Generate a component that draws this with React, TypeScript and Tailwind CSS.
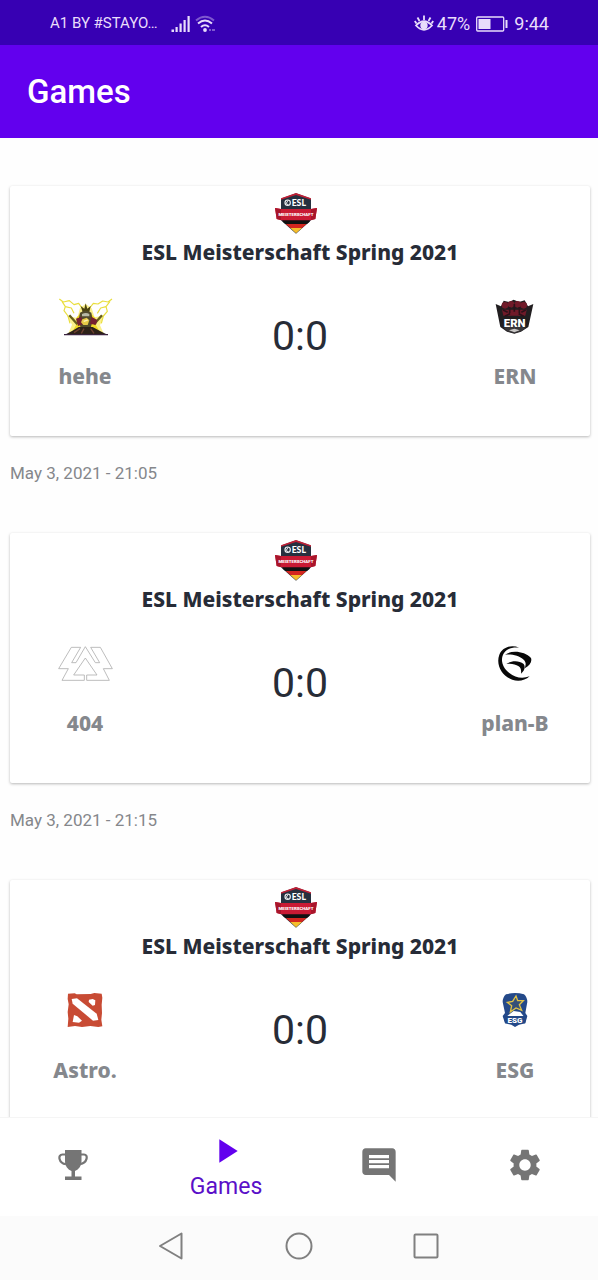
import type { ReactNode } from "react";
import { MdComment, MdPlayArrow, MdSettings } from "react-icons/md";

function EslLogo() {
  return (
    <svg viewBox="45 20 126 123" className="mr-2 h-[41px] w-[42px]" role="img" aria-label="ESL Meisterschaft">
      <path d="M108 21 L142 33 L153 38 V102 L108 142 L63 102 V38 L74 33 Z" fill="#26303f" />
      <path d="M63 40 V36 L108 20 L153 36 V40 L108 26 Z" fill="#c02036" />
      <path d="M68 101 H149 V106 L141 113 H76 L68 106 Z" fill="#111" />
      <path d="M77 113 H140 L126 125 H91 Z" fill="#d3261f" />
      <path d="M91 125 H126 L108 141 Z" fill="#f5bd2c" />
      <path d="M45 65 L63 68 H153 L171 65 L166 98 L151 102 H65 L50 98 Z" fill="#c91a34" />
      <path d="M45 65 L63 68 V102 L50 98 Z M171 65 L153 68 V102 L166 98 Z" fill="#a9152b" />
      <circle cx="83" cy="49" r="8" fill="none" stroke="#eef0f3" strokeWidth="3.500" />
      <path d="M84 42 L79 51 L85 56" fill="none" stroke="#eef0f3" strokeWidth="3" />
      <text x="95" y="58" fontFamily="Lato" fontWeight="900" fontSize="26" fill="#fff">ESL</text>
      <text x="108" y="90" textAnchor="middle" fontFamily="Roboto" fontWeight="900" fontSize="13" fill="#fff">MEISTERSCHAFT</text>
    </svg>
  );
}

function HeheLogo() {
  return (
    <svg viewBox="50 24 165 114" className="h-[38px] w-[55px]" aria-hidden="true">
      <path d="M80 133 L92 104 L78 78 L108 84 L116 54 L133 42 L151 55 L160 82 L188 76 L176 106 L188 133 Z" fill="#fbf08a" />
      <path d="M90 130 L104 106 L106 82 L133 56 L162 84 L164 106 L178 130 Z" fill="#f0d824" />
      <g fill="none" stroke="#e9de3c" strokeWidth="3.500" strokeLinejoin="round">
        <path d="M54 27 L66 36 L84 32 L98 44 L112 40 L122 54" />
        <path d="M62 34 L72 50 L68 62 L80 78 L86 100" />
        <path d="M72 50 L90 54 L98 70" />
        <path d="M212 27 L200 36 L184 33 L170 42 L156 40 L145 54" />
        <path d="M206 34 L194 50 L198 64 L186 78 L180 100" />
        <path d="M194 50 L178 54 L168 70" />
      </g>
      <path d="M84 76 L108 103 M182 76 L158 103" stroke="#665e1a" strokeWidth="7" />
      <path d="M124 66 L118 48 L129 56 L133 40 L138 56 L148 48 L144 66 Z" fill="#4b4310" />
      <path d="M116 68 Q133 56 150 68 L154 90 L148 114 H118 L112 90 Z" fill="#514a2b" />
      <path d="M122 72 Q134 66 144 72 V79 H122 Z" fill="#b8b9a5" />
      <path d="M104 86 L120 80 L126 102 L110 108 Z M150 80 L168 90 L164 104 L146 102 Z" fill="#762030" />
      <path d="M123 88 L136 83 L144 91 L139 105 H126 L119 97 Z" fill="#e6c947" />
      <path d="M127 94 L139 90" stroke="#fff3b5" strokeWidth="4" />
      <path d="M69 135 L92 123 L112 111 H154 L176 123 L200 135 Z" fill="#2d2118" />
      <path d="M98 128 L116 116 M120 130 L128 116 M148 116 L158 130" stroke="#6f4030" strokeWidth="4" />
      <path d="M68 134 H200" stroke="#3a233e" strokeWidth="4" />
    </svg>
  );
}

function ErnLogo() {
  return (
    <svg viewBox="46 39 117 114" className="h-[38px] w-[39px]" aria-hidden="true">
      <path d="M48 57 L64 64 L72 47 L88 51 L102 44 L118 51 L135 46 L145 64 L161 57 L146 126 L124 140 L104 146 L82 140 L62 126 Z" fill="#211e20" />
      <g fill="#701a29">
        <circle cx="76" cy="61" r="10" />
        <circle cx="94" cy="58" r="10" />
        <circle cx="114" cy="58" r="10" />
        <circle cx="132" cy="61" r="10" />
        <path d="M67 74 H141 L137 92 H71 Z" />
      </g>
      <path d="M70 75 L84 82 M90 66 V85 M104 57 V80 M119 66 V85 M138 75 L125 82 M76 94 L91 86 M132 94 L117 86" stroke="#2c1119" strokeWidth="5" />
      <path d="M72 128 L104 121 L139 128 L124 139 L104 145 L83 139 Z" fill="#383638" />
      <path d="M88 136 L104 131 L120 136 L104 142 Z" fill="#c9c7c6" />
      <text x="105" y="126" textAnchor="middle" fontFamily="Roboto" fontWeight="900" fontSize="34" fill="#fff">ERN</text>
    </svg>
  );
}

function FourLogo() {
  return (
    <svg viewBox="51 30 165 114" className="h-[38px] w-[55px]" aria-hidden="true">
      <path
        d="M91 37 H119 L92 83 H105 L133 35 L163 83 H176 L149 37 H178 L214 101 H187 L205 136 H137 V120 H168 L133 69 L98 120 H130 V136 H63 L82 101 H53 Z"
        fill="none"
        stroke="#acacac"
        strokeWidth="2.400"
      />
    </svg>
  );
}

function PlanBLogo() {
  return (
    <svg viewBox="80 30 108 114" className="h-[38px] w-[36px]" aria-hidden="true">
      <path d="M147 38 C123 28 96 36 87 59 C76 89 94 123 126 134 C143 141 164 137 178 124 C156 132 134 128 117 114 C95 97 89 72 101 54 C110 41 126 36 147 38 Z" fill="#080808" />
      <path d="M104 59 C126 44 164 50 182 69 C186 80 178 91 163 100 C167 90 168 82 160 74 C147 61 122 56 104 59 Z" fill="#080808" />
      <path d="M108 87 C124 76 146 76 160 87 C166 96 163 106 152 116 C153 106 152 99 145 94 C135 87 122 85 108 87 Z" fill="#080808" />
    </svg>
  );
}

function AstroLogo() {
  return (
    <svg viewBox="80 36 108 114" className="h-[38px] w-[36px]" aria-hidden="true">
      <path d="M83 41 L103 40 L109 43 L151 42 L162 39 L184 41 L186 53 L184 74 L185 99 L183 119 L186 139 L174 141 L150 138 L125 141 L104 138 L82 141 L84 116 L82 96 L85 73 L82 57 Z" fill="#c84b34" />
      <path d="M94 57 L110 55 L169 101 L174 120 L158 122 L97 71 Z" fill="#fff" />
      <path d="M146 59 L157 57 L165 61 L164 75 L157 77 L145 66 Z M101 105 L111 109 L125 122 L116 128 L97 126 Z" fill="#fff" />
    </svg>
  );
}

function EsgLogo() {
  return (
    <svg viewBox="60 36 84 114" className="h-[38px] w-[28px]" aria-hidden="true">
      <path d="M75 43 Q102 35 129 43 Q139 52 139 66 L133 99 L139 108 L133 130 L114 134 L102 141 L91 134 L72 130 L65 108 L72 99 L65 66 Q65 52 75 43 Z" fill="#244989" />
      <path d="M86 102 L98 93 L118 96 L128 109 H78 Z" fill="#fff" />
      <path d="M105 48 L110 62 L127 62 L115 74 L122 91 L105 84 L88 96 L92 77 L79 67 L95 64 Z" fill="#355078" stroke="#e0c247" strokeWidth="4" />
      <path d="M67 108 H137 L132 130 H73 Z" fill="#234887" />
      <text x="102" y="128" textAnchor="middle" fontFamily="Roboto" fontWeight="900" fontSize="24" fill="#fff">ESG</text>
    </svg>
  );
}

type Team = { name: string; logo: ReactNode };
type Match = { id: number; home: Team; away: Team; date?: string };

const matches: Match[] = [
  { id: 1, home: { name: "hehe", logo: <HeheLogo /> }, away: { name: "ERN", logo: <ErnLogo /> }, date: "May 3, 2021 - 21:05" },
  { id: 2, home: { name: "404", logo: <FourLogo /> }, away: { name: "plan-B", logo: <PlanBLogo /> }, date: "May 3, 2021 - 21:15" },
  { id: 3, home: { name: "Astro.", logo: <AstroLogo /> }, away: { name: "ESG", logo: <EsgLogo /> } },
];

function TeamColumn({ name, logo }: Team) {
  return (
    <div className="flex w-[150px] flex-col items-center">
      {logo}
      <p className="mt-[26px] font-['Noto_Sans',sans-serif] text-[21px] leading-7 font-extrabold text-[#85888d]">{name}</p>
    </div>
  );
}

function MatchItem({ home, away, date }: Match) {
  return (
    <li className="pt-12">
      <article className="flex flex-col items-center rounded-xs bg-white pt-[7px] pb-[46px] shadow-[0_1px_3px_rgba(0,0,0,0.28)]">
        <EslLogo />
        <h2 className="mt-1 font-['Noto_Sans',sans-serif] text-[21px] leading-7 font-extrabold text-[#272c37]">
          ESL Meisterschaft Spring 2021
        </h2>
        <div className="mt-8 flex w-full items-start justify-between">
          <TeamColumn {...home} />
          <p className="mt-[14px] text-[41px] leading-12 text-[#272c37]">0:0</p>
          <TeamColumn {...away} />
        </div>
      </article>
      {date && <p className="mt-[25px] text-[17px] leading-6 text-[#85878b]">{date}</p>}
    </li>
  );
}

function StatusBar() {
  return (
    <div className="flex h-[45px] shrink-0 items-center justify-between bg-[#3700b3] pt-0.5 pr-[49px] pl-[50px] text-[#e9ddfb]">
      <div className="flex items-center">
        <span className="text-[15px]">A1 BY #STAYO…</span>
        <svg viewBox="0 0 20 18" className="ml-[13px] h-[18px] w-5" fill="currentColor" aria-hidden="true">
          <path d="M.5 14.500h2.500v2.500H.5zM4.500 12h2.200v5H4.500zM8.500 8.500h2.200V17H8.500zM12.500 5h2.200v12h-2.200zM16.500 1h2.200v16h-2.200z" />
        </svg>
        <svg viewBox="0 0 22 18" className="ml-1 h-[18px] w-[22px]" fill="none" stroke="currentColor" strokeWidth="2" aria-hidden="true">
          <path d="M1 5.500Q10-2 19 5.500" opacity=".4" />
          <path d="M3 8.500Q10 2.500 17 8.500M6 12Q10 8.500 14 12" />
          <circle cx="10" cy="15" r="1.900" fill="currentColor" stroke="none" />
          <path d="M14 15h2M17 15h3" opacity=".4" />
        </svg>
      </div>
      <div className="flex items-center text-lg">
        <svg viewBox="0 0 20 18" className="mr-[3px] h-[18px] w-5" fill="none" stroke="currentColor" strokeWidth="1.800" aria-hidden="true">
          <path d="M2 10.500Q10 2 18 10.500Q10 19 2 10.500Z M10 5V.5M5.500 6L3.500 2.500M14.500 6L16.500 2.500M2.500 8.500L.8 6M17.500 8.500L19.200 6" />
          <circle cx="10" cy="10.500" r="2.800" fill="currentColor" />
        </svg>
        <span>47%</span>
        <svg viewBox="0 0 32 16" className="mx-[6px] h-4 w-8" fill="none" stroke="currentColor" aria-hidden="true">
          <rect x=".7" y="1" width="27" height="14" rx="1" strokeWidth="1.300" />
          <path d="M2.500 3h12v10h-12zM29.500 4h2v8h-2z" fill="currentColor" stroke="none" />
        </svg>
        <span>9:44</span>
      </div>
    </div>
  );
}

function TrophyIcon() {
  return (
    <svg viewBox="0 0 30 30" className="size-[30px]" aria-hidden="true">
      <path d="M7 0h16.500v11c0 4.500-2.500 8.500-6.500 10v5.500h6.500V30H7v-3.500h6.500V21C9.500 19.500 7 15.500 7 11Z" fill="currentColor" />
      <path d="M8 4.500H4.500C-.5 4.500.5 13 8 14.200M22.500 4.500H26c4.500 0 3.500 8.500-4 9.700" fill="none" stroke="currentColor" strokeWidth="2.200" />
    </svg>
  );
}

export default function App() {
  return (
    <div className="flex h-screen flex-col bg-white font-['Roboto',sans-serif]">
      <StatusBar />
      <header className="flex h-[93px] shrink-0 items-center bg-[#6200ee] px-[27px]">
        <h1 className="text-[33px] leading-10 font-medium text-white">Games</h1>
      </header>
      <main className="min-h-0 flex-1 overflow-hidden bg-[#fefefe] pr-2 pl-[10px]">
        <ul>
          {matches.map((match) => (
            <MatchItem key={match.id} {...match} />
          ))}
        </ul>
      </main>
      <nav className="flex h-[99px] shrink-0 border-t border-[#f5f5f5] bg-white text-[#757575]" aria-label="Main">
        <button type="button" className="flex flex-1 items-center justify-center pb-1" aria-label="Tournaments">
          <TrophyIcon />
        </button>
        <button type="button" className="flex flex-[1.1] flex-col items-center pt-[13px] text-[#6200ee]" aria-current="page">
          <MdPlayArrow className="size-10" />
          <span className="text-[23px] leading-8 text-[#5a0fc8]">Games</span>
        </button>
        <button type="button" className="flex flex-1 items-center justify-center pb-1" aria-label="Messages">
          <MdComment className="size-10" />
        </button>
        <button type="button" className="flex flex-1 items-center justify-center pb-1" aria-label="Settings">
          <MdSettings className="size-[38px]" />
        </button>
      </nav>
      <div className="flex h-16 shrink-0 items-center justify-center gap-[99px] bg-[#fbfbfb] pb-1 text-[#808080]">
        <button type="button" aria-label="Back">
          <svg viewBox="0 0 28 28" className="size-7" fill="none" stroke="currentColor" strokeWidth="2" strokeLinejoin="round">
            <path d="M2 14L23.500 1.500V26.500Z" />
          </svg>
        </button>
        <button type="button" aria-label="Home">
          <svg viewBox="0 0 28 28" className="size-7" fill="none" stroke="currentColor" strokeWidth="2">
            <circle cx="14" cy="14" r="12.500" />
          </svg>
        </button>
        <button type="button" aria-label="Recent apps">
          <svg viewBox="0 0 28 28" className="size-7" fill="none" stroke="currentColor" strokeWidth="2">
            <rect x="2.500" y="2.500" width="23" height="23" rx="1" />
          </svg>
        </button>
      </div>
    </div>
  );
}
